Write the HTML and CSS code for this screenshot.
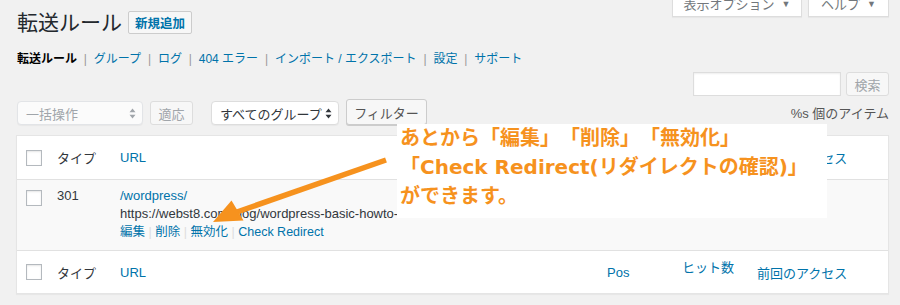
FILE: index.html
```html
<!DOCTYPE html>
<html lang="ja">
<head>
<meta charset="utf-8">
<title>転送ルール</title>
<link rel="stylesheet" href="styles.css">
</head>
<body>
<div class="screen-meta-links">
  <span class="meta-tab tab-options">表示オプション<span class="caret">▼</span></span>
  <span class="meta-tab tab-help">ヘルプ<span class="caret">▼</span></span>
</div>
<div class="wrap">
  <div class="title-row">
    <h1 class="page-title">転送ルール</h1>
    <a class="page-title-action">新規追加</a>
  </div>
  <div class="subsubsub"><strong class="current">転送ルール</strong> <span class="sep">|</span> <a class="link">グループ</a> <span class="sep">|</span> <a class="link">ログ</a> <span class="sep">|</span> <a class="link">404 エラー</a> <span class="sep">|</span> <a class="link">インポート / エクスポート</a> <span class="sep">|</span> <a class="link">設定</a> <span class="sep">|</span> <a class="link">サポート</a></div>
  <div class="search-box">
    <span class="search-input"></span>
    <span class="btn btn-search disabled">検索</span>
  </div>
  <div class="tablenav">
    <div class="actions">
      <div class="select sel-bulk disabled">一括操作<svg class="updown" width="7" height="11" viewBox="0 0 7 11"><path d="M3.5 0.5L6.5 4.2H0.5Z M3.5 10.5L6.5 6.8H0.5Z"/></svg></div>
      <span class="btn btn-apply disabled">適応</span>
    </div>
    <div class="actions">
      <div class="select sel-group">すべてのグループ<svg class="updown" width="7" height="11" viewBox="0 0 7 11"><path d="M3.5 0.5L6.5 4.2H0.5Z M3.5 10.5L6.5 6.8H0.5Z"/></svg></div>
      <span class="btn btn-filter">フィルター</span>
    </div>
    <div class="displaying-num">%s 個のアイテム</div>
  </div>
  <div class="table">
    <div class="row head">
      <div class="cell"><span class="cb"></span></div>
      <div class="cell">タイプ</div>
      <div class="cell"><a class="link">URL</a></div>
      <div class="cell"><a class="link">Pos</a></div>
      <div class="cell hits">ヒット数</div>
      <div class="cell"><a class="link">前回のアクセス</a></div>
    </div>
    <div class="row item">
      <div class="cell"><span class="cb cb-item"></span></div>
      <div class="cell">301</div>
      <div class="cell url-cell">
        <div><a class="link">/wordpress/</a></div>
        <div class="target">https://webst8.com/blog/wordpress-basic-howto-redirect/</div>
        <div class="row-actions"><a class="link">編集</a> <span class="sep-light">|</span> <a class="link">削除</a> <span class="sep-light">|</span> <a class="link">無効化</a> <span class="sep-light">|</span> <a class="link">Check Redirect</a></div>
      </div>
      <div class="cell"></div>
      <div class="cell"></div>
      <div class="cell"></div>
    </div>
    <div class="row foot">
      <div class="cell"><span class="cb"></span></div>
      <div class="cell">タイプ</div>
      <div class="cell"><a class="link">URL</a></div>
      <div class="cell"><a class="link">Pos</a></div>
      <div class="cell hits">ヒット数</div>
      <div class="cell"><a class="link">前回のアクセス</a></div>
    </div>
  </div>
</div>
<div class="annotation">あとから「編集」「削除」「無効化」<br>「Check Redirect(リダイレクトの確認)」<br>ができます。</div>
<svg class="arrow" width="900" height="305" viewBox="0 0 900 305">
  <line x1="386" y1="160" x2="234" y2="213" stroke="#f6921e" stroke-width="5.5"/>
  <polygon points="213,222 243.5,220.5 231.5,200.5" fill="#f6921e"/>
</svg>
</body>
</html>
```
FILE: styles.css
```css
html, body {
  margin: 0;
  padding: 0;
}
body {
  position: relative;
  width: 900px;
  height: 305px;
  overflow: hidden;
  background: #f1f1f1;
  font-family: "Liberation Sans", "Noto Sans CJK JP", sans-serif;
  font-size: 13px;
  color: #32373c;
}
.link {
  color: #0073aa;
  text-decoration: none;
}

/* screen meta tabs */
.screen-meta-links {
  float: right;
  display: flex;
  gap: 6px;
  margin: -9px 11px 0 0;
}
.meta-tab {
  height: 26px;
  box-sizing: border-box;
  border: 1px solid #ddd;
  border-top: 0;
  background: #fff;
  color: #72777c;
  font-size: 13px;
  display: flex;
  align-items: center;
  justify-content: center;
  box-shadow: 0 1px 1px rgba(0, 0, 0, .04);
}
.tab-options { width: 130px; }
.tab-help { width: 81px; }
.caret {
  font-size: 9px;
  margin-left: 7px;
  color: #72777c;
}

.wrap {
  padding: 0 11px 0 16px;
}
.title-row {
  display: flex;
  align-items: center;
  gap: 6px;
  padding: 9px 0 0 1px;
}
.page-title {
  margin: 0;
  font-size: 21px;
  font-weight: 400;
  line-height: 27px;
  color: #23282d;
}
.page-title-action {
  height: 23px;
  box-sizing: border-box;
  border: 1px solid #ccc;
  border-radius: 2px;
  background: #f7f7f7;
  color: #0073aa;
  font-size: 12.5px;
  font-weight: 600;
  padding: 0 6px;
  display: flex;
  align-items: center;
}

.subsubsub {
  margin-top: 14px;
  padding-left: 1px;
  font-size: 12px;
  line-height: 18px;
  white-space: nowrap;
}
.current {
  color: #000;
  font-weight: 700;
}
.sep {
  color: #999;
  margin: 0 3.5px;
}

.search-box {
  display: flex;
  justify-content: flex-end;
  gap: 5px;
  margin-top: 4px;
}
.search-input {
  width: 148px;
  height: 24px;
  box-sizing: border-box;
  border: 1px solid #ddd;
  background: #fff;
  box-shadow: inset 0 1px 2px rgba(0, 0, 0, .07);
}
.btn {
  height: 24px;
  box-sizing: border-box;
  border: 1px solid #ccc;
  border-radius: 3px;
  background: #f7f7f7;
  color: #555;
  display: inline-flex;
  align-items: center;
  justify-content: center;
  box-shadow: 0 1px 0 #ccc;
}
.btn.disabled {
  color: #a0a5aa;
  border-color: #ddd;
  box-shadow: none;
}
.btn-search { width: 43px; }
.btn-apply { width: 43px; }
.btn-filter { width: 81px; height: 26px; }

.tablenav {
  display: flex;
  align-items: flex-end;
  height: 26px;
  margin-top: 3px;
  padding-left: 1px;
}
.actions {
  display: flex;
  align-items: flex-end;
  gap: 7px;
}
.actions + .actions { margin-left: 18px; }
.select {
  height: 24px;
  box-sizing: border-box;
  border: 1px solid #ddd;
  border-radius: 4px;
  background: #fff;
  color: #32373c;
  display: flex;
  align-items: center;
  justify-content: space-between;
  padding: 0 6px 0 8px;
  box-shadow: 0 1px 1px rgba(0, 0, 0, .04);
}
.select .updown { fill: #32373c; }
.select.disabled {
  color: #a0a5aa;
  background: #fbfbfb;
  border-color: #e2e4e7;
}
.select.disabled .updown { fill: #a0a5aa; }
.sel-bulk { width: 126px; }
.sel-group { width: 128px; }
.displaying-num {
  margin-left: auto;
  align-self: center;
  color: #555;
}

.table {
  margin-top: 10px;
  background: #fff;
  border: 1px solid #e5e5e5;
  box-shadow: 0 1px 1px rgba(0, 0, 0, .04);
}
.row {
  display: grid;
  grid-template-columns: 40px 63px 487px 75px 75px 1fr;
}
.row.head {
  height: 44px;
  box-sizing: border-box;
  border-bottom: 1px solid #e1e1e1;
  align-items: center;
}
.row.item {
  height: 71px;
  box-sizing: border-box;
  padding-top: 7px;
  background: #f9f9f9;
  border-bottom: 1px solid #e1e1e1;
  align-items: start;
  line-height: 18px;
}
.row.foot {
  height: 42px;
  align-items: center;
}
.cell { min-width: 0; white-space: nowrap; }
.cb {
  display: block;
  width: 16px;
  height: 16px;
  box-sizing: border-box;
  margin-left: 9px;
  border: 1px solid #b4b9be;
  background: #fff;
  box-shadow: inset 0 1px 2px rgba(0, 0, 0, .1);
}
.cb-item { margin-top: 3px; }
.hits { padding-bottom: 12px; color: #0073aa; }
.target { color: #32373c; }
.row-actions { font-size: 12.5px; }
.sep-light { color: #ddd; }

/* overlays */
.annotation {
  position: absolute;
  left: 397px;
  top: 124px;
  width: 430px;
  height: 94px;
  box-sizing: border-box;
  padding-left: 3px;
  background: #fff;
  color: #f6921e;
  font-family: "DejaVu Sans", "Noto Sans CJK JP", sans-serif;
  font-weight: 700;
  font-size: 20px;
  line-height: 29px;
  white-space: nowrap;
  text-spacing-trim: space-all;
  font-feature-settings: "palt" 0, "halt" 0;
}
.arrow {
  position: absolute;
  left: 0;
  top: 0;
  pointer-events: none;
}
```
